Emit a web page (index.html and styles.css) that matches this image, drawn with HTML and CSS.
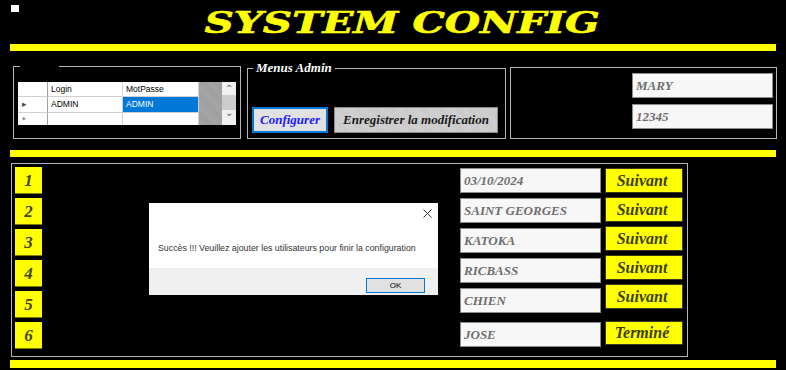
FILE: index.html
```html
<!DOCTYPE html>
<html lang="fr">
<head>
    <meta charset="UTF-8">
    <meta name="viewport" content="width=device-width, initial-scale=1.0">
    <title>System Config</title>
    <link rel="stylesheet" href="styles.css">
</head>
<body>
    <div class="page">
        <header class="head">
            <span class="corner"></span>
            <h1 class="title"><span>SYSTEM CONFIG</span></h1>
        </header>

        <div class="bar"></div>

        <section class="top">
            <div class="group g-users">
                <div class="legend blank"></div>
                <div class="grid">
                    <div class="cell rowhead"></div>
                    <div class="cell">Login</div>
                    <div class="cell">MotPasse</div>
                    <div class="empty"></div>
                    <div class="scroll">
                        <span class="arrow">&#8963;</span>
                        <span class="thumb"></span>
                        <span class="arrow down">&#8964;</span>
                    </div>
                    <div class="cell rowhead"><span class="tri">&#9656;</span></div>
                    <div class="cell">ADMIN</div>
                    <div class="cell selected">ADMIN</div>
                    <div class="cell rowhead last"><span class="star">*</span></div>
                    <div class="cell last"></div>
                    <div class="cell last"></div>
                </div>
            </div>

            <div class="group g-admin">
                <div class="legend">Menus Admin</div>
                <div class="admin-btns">
                    <button class="btn-config">Configurer</button>
                    <button class="btn-save">Enregistrer la modification</button>
                </div>
            </div>

            <div class="group g-cred">
                <div class="field">MARY</div>
                <div class="field">12345</div>
            </div>
        </section>

        <div class="bar bar2"></div>

        <section class="steps">
            <div class="nums">
                <div class="num">1</div>
                <div class="num">2</div>
                <div class="num">3</div>
                <div class="num">4</div>
                <div class="num">5</div>
                <div class="num">6</div>
            </div>
            <div class="fields">
                <div class="field">03/10/2024</div>
                <div class="field">SAINT GEORGES</div>
                <div class="field">KATOKA</div>
                <div class="field">RICBASS</div>
                <div class="field">CHIEN</div>
                <div class="field last">JOSE</div>
            </div>
            <div class="nexts">
                <button class="next">Suivant</button>
                <button class="next">Suivant</button>
                <button class="next">Suivant</button>
                <button class="next">Suivant</button>
                <button class="next">Suivant</button>
                <button class="next last">Terminé</button>
            </div>
        </section>

        <div class="bar bar3"></div>

        <!-- boite de message -->
        <div class="dialog">
            <div class="dialog-body">
                <svg class="close" width="9" height="9" viewBox="0 0 9 9">
                    <path d="M0.5 0.5 L8.5 8.5 M8.5 0.5 L0.5 8.5" stroke="#333" stroke-width="1" fill="none"/>
                </svg>
                <p class="message">Succès !!! Veuillez ajouter les utilisateurs pour finir la configuration</p>
            </div>
            <div class="dialog-foot">
                <button class="ok">OK</button>
            </div>
        </div>
    </div>
</body>
</html>
```

FILE: styles.css
```css
* {
    margin: 0;
    padding: 0;
    box-sizing: border-box;
}

body {
    background: #000;
    font-family: "Liberation Serif", serif;
    overflow: hidden;
}

.page {
    position: relative;
    width: 786px;
    height: 370px;
}

button {
    font-family: inherit;
    cursor: pointer;
}

/* en-tete */
.head {
    display: flex;
    height: 44px;
}

.corner {
    width: 8px;
    height: 7px;
    margin: 5px 0 0 11px;
    background: #fff;
}

.title {
    flex: 1;
    text-align: center;
    padding-top: 6px;
    font-family: "DejaVu Serif", serif;
    font-style: italic;
    font-weight: bold;
    font-size: 29px;
    line-height: 34px;
    color: #ffff00;
    -webkit-text-stroke: 0.6px #ffff00;
}

.title span {
    display: inline-block;
    transform: scaleX(1.4);
}

.bar {
    height: 7px;
    margin: 0 10px;
    background: #ffff00;
}

.bar2 {
    margin-top: 11px;
}

.bar3 {
    margin-top: 3px;
    height: 8px;
}

/* groupes du haut */
.top {
    display: flex;
    align-items: flex-start;
    margin-top: 15px;
}

.group {
    border: 1px solid #b4b4b4;
}

.legend {
    width: fit-content;
    height: 14px;
    margin: -8px 0 0 5px;
    padding: 0 3px;
    background: #000;
    color: #fff;
    font-style: italic;
    font-weight: bold;
    font-size: 13px;
    line-height: 14px;
}

.legend.blank {
    width: 39px;
    margin-left: 6px;
}

.g-users {
    width: 228px;
    height: 73px;
    margin-left: 13px;
}

.grid {
    display: grid;
    grid-template-columns: 30px 75px 76px 23px 14px;
    grid-template-rows: 15px 16px 12px;
    width: 218px;
    margin: 9px 0 0 4px;
    font-family: "Liberation Sans", sans-serif;
    font-size: 8.5px;
    color: #000;
    background: #fff;
    overflow: hidden;
}

.cell {
    border-right: 1px solid #d0d0d0;
    border-bottom: 1px solid #d0d0d0;
    padding-left: 3px;
    line-height: 15px;
    background: #fff;
}

.cell.last {
    border-bottom: none;
}

.cell.selected {
    background: #0078d7;
    color: #fff;
}

.rowhead {
    border-right: 1px solid #a0a0a0;
    padding-left: 4px;
}

.tri {
    color: #505050;
    font-size: 9px;
}

.star {
    color: #505050;
    font-size: 9px;
    line-height: 12px;
}

.empty {
    grid-column: 4;
    grid-row: 1 / 4;
    background: repeating-linear-gradient(45deg, #a8a8a8 0, #a8a8a8 1px, #9c9c9c 1px, #9c9c9c 2px);
}

.scroll {
    grid-column: 5;
    grid-row: 1 / 4;
    display: flex;
    flex-direction: column;
    align-items: center;
    background: #f0f0f0;
}

.arrow {
    height: 13px;
    color: #606060;
    font-size: 10px;
    line-height: 14px;
}

.arrow.down {
    line-height: 6px;
    height: 10px;
}

.thumb {
    width: 14px;
    height: 15px;
    background: #cdcdcd;
}

.g-admin {
    width: 259px;
    height: 71px;
    margin: 2px 0 0 6px;
}

.admin-btns {
    display: flex;
    gap: 6px;
    margin: 32px 0 0 4px;
}

.btn-config {
    width: 76px;
    height: 26px;
    border: 2px solid #0078d7;
    background: #e1e1e1;
    color: #1a1aff;
    font-style: italic;
    font-weight: bold;
    font-size: 13px;
}

.btn-save {
    width: 164px;
    height: 26px;
    border: 1px solid #8a8a8a;
    background: repeating-linear-gradient(45deg, #d2d2d2 0, #d2d2d2 1px, #c8c8c8 1px, #c8c8c8 2px);
    color: #1a1a1a;
    font-style: italic;
    font-weight: bold;
    font-size: 13px;
}

.g-cred {
    display: flex;
    flex-direction: column;
    align-items: flex-end;
    gap: 6px;
    width: 267px;
    height: 72px;
    margin: 1px 0 0 4px;
    padding: 5px 3px;
}

.field {
    width: 141px;
    height: 25px;
    border: 1px solid #8c8c8c;
    background: #f7f7f7;
    color: #6e6e6e;
    font-style: italic;
    font-weight: bold;
    font-size: 13px;
    line-height: 23px;
    padding-left: 3px;
    white-space: nowrap;
}

/* etapes */
.steps {
    display: flex;
    width: 677px;
    height: 194px;
    margin: 6px 0 0 11px;
    border: 1px solid #b4b4b4;
    padding: 3px 4px 0 3px;
}

.nums {
    display: flex;
    flex-direction: column;
    gap: 4px;
}

.num {
    width: 27px;
    height: 27px;
    background: #ffff00;
    border-bottom: 1px solid #7a7a00;
    color: #44440c;
    font-style: italic;
    font-weight: bold;
    font-size: 17px;
    line-height: 27px;
    text-align: center;
}

.fields {
    display: flex;
    flex-direction: column;
    gap: 5px;
    margin-left: auto;
    padding-top: 1px;
}

.fields .field.last {
    margin-top: 4px;
}

.nexts {
    display: flex;
    flex-direction: column;
    gap: 4px;
    margin-left: 4px;
    padding-top: 1px;
}

.next {
    width: 78px;
    height: 25px;
    border: 1px solid #3a3a20;
    background: #ffff00;
    color: #3c3c06;
    font-style: italic;
    font-weight: bold;
    font-size: 16px;
    line-height: 20px;
    padding-right: 4px;
}

.next.last {
    margin-top: 8px;
    height: 24px;
}

/* boite de message */
.dialog {
    position: absolute;
    left: 149px;
    top: 203px;
    width: 289px;
    height: 92px;
    display: flex;
    flex-direction: column;
    background: #fff;
    font-family: "Liberation Sans", sans-serif;
}

.dialog-body {
    display: flex;
    flex-direction: column;
    height: 65px;
    padding: 6px 6px 0 9px;
}

.close {
    align-self: flex-end;
}

.message {
    margin-top: 25px;
    font-size: 8.8px;
    color: #333;
    white-space: nowrap;
}

.dialog-foot {
    flex: 1;
    display: flex;
    justify-content: flex-end;
    padding: 10px 13px 0 0;
    background: #f0f0f0;
}

.ok {
    width: 59px;
    height: 15px;
    border: 1px solid #0078d7;
    background: #e1e1e1;
    color: #000;
    font-family: "Liberation Sans", sans-serif;
    font-size: 8px;
}
```
